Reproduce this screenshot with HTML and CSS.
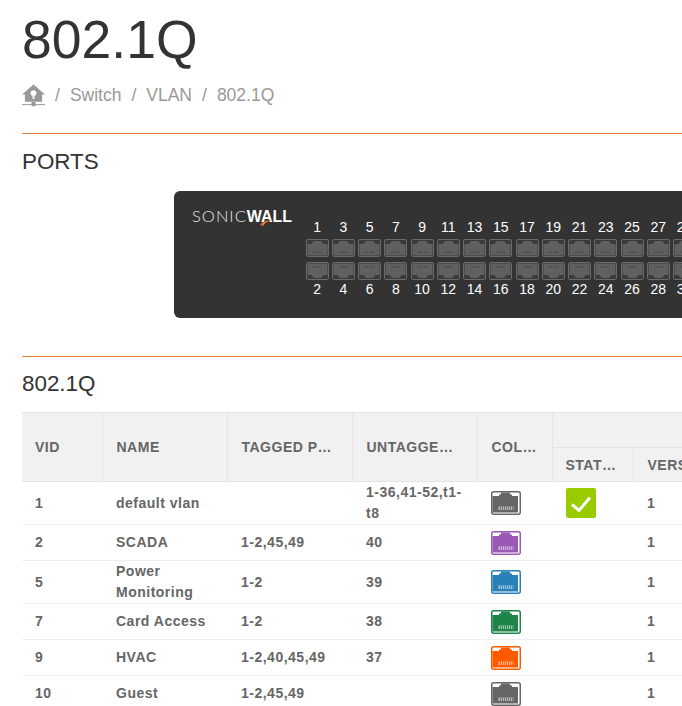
FILE: index.html
```html
<!DOCTYPE html>
<html>
<head>
	<meta charset="utf-8">
	<title>802.1Q</title>
	<link rel="stylesheet" href="styles.css">
</head>
<body>

<svg class='defs' width='0' height='0'>
	<symbol id='port-dim' viewBox='0 0 23 18'>
		<rect x='0.500' y='0.500' width='22' height='17' rx='1.500' fill='#3a3a3a' stroke='#6a6a6a'/>
		<path d='M1.500 5H6V3.500H7.500V2H15.500V3.500H17V5H21.500V16.500H1.500Z' fill='#606060'/>
		<path d='M7 12.500H16V14H7Z' fill='#464646'/>
		<path d='M8.500 12.500V14M10.500 12.500V14M12.500 12.500V14M14.500 12.500V14' stroke='#777' stroke-width='0.500'/>
	</symbol>
	<symbol id='port-live' viewBox='0 0 30 24'>
		<rect x='0.750' y='0.750' width='28.500' height='22.500' rx='2' fill='#fff' stroke='currentColor' stroke-width='1.500'/>
		<path d='M1.500 5H8V3.500H10V1.500H19V3.500H21V5H27V21.500H1.500Z' fill='currentColor'/>
		<path d='M7.500 15.500H22.500V19H7.500Z' fill='#fff' opacity='0.550'/>
		<path d='M9.500 15.500V19M11.500 15.500V19M13.500 15.500V19M15.500 15.500V19M17.500 15.500V19M19.500 15.500V19M21.500 15.500V19' stroke='currentColor' stroke-width='0.800'/>
	</symbol>
</svg>

<h1>802.1Q</h1>

<nav class='crumbs'>
	<svg class='home' viewBox='0 0 24 23'>
		<path d='M12 0L24 10.500H21V18H3V10.500H0Z' fill='#999'/>
		<circle cx='12' cy='9' r='3' fill='#fff'/>
		<path d='M11 11H13V15H11Z' fill='#fff'/>
		<path d='M0 20.500H24V21.500H0Z' fill='#999'/>
		<circle cx='12' cy='20.500' r='2.500' fill='#999'/>
	</svg>
	<span class='sep'>/</span>
	<a>Switch</a>
	<span class='sep'>/</span>
	<a>VLAN</a>
	<span class='sep'>/</span>
	<a>802.1Q</a>
</nav>

<hr class='rule rule-top'>

<h2 class='ports-title'>PORTS</h2>

<section class='panel'>
	<div class='logo'>
		<span class='logo-thin'>SONIC</span><span class='logo-bold'>WALL</span>
		<svg class='swoosh' viewBox='0 0 14 8'>
			<path d='M0 7C3 3 8 1 14 2C9 2.500 6 4 4 8C3 7 1.500 7 0 7Z' fill='#e8762c'/>
		</svg>
	</div>
	<div class='switch'>
		<span>1</span><svg><use href='#port-dim'/></svg><svg class='flip'><use href='#port-dim'/></svg><span>2</span>
		<span>3</span><svg><use href='#port-dim'/></svg><svg class='flip'><use href='#port-dim'/></svg><span>4</span>
		<span>5</span><svg><use href='#port-dim'/></svg><svg class='flip'><use href='#port-dim'/></svg><span>6</span>
		<span>7</span><svg><use href='#port-dim'/></svg><svg class='flip'><use href='#port-dim'/></svg><span>8</span>
		<span>9</span><svg><use href='#port-dim'/></svg><svg class='flip'><use href='#port-dim'/></svg><span>10</span>
		<span>11</span><svg><use href='#port-dim'/></svg><svg class='flip'><use href='#port-dim'/></svg><span>12</span>
		<span>13</span><svg><use href='#port-dim'/></svg><svg class='flip'><use href='#port-dim'/></svg><span>14</span>
		<span>15</span><svg><use href='#port-dim'/></svg><svg class='flip'><use href='#port-dim'/></svg><span>16</span>
		<span>17</span><svg><use href='#port-dim'/></svg><svg class='flip'><use href='#port-dim'/></svg><span>18</span>
		<span>19</span><svg><use href='#port-dim'/></svg><svg class='flip'><use href='#port-dim'/></svg><span>20</span>
		<span>21</span><svg><use href='#port-dim'/></svg><svg class='flip'><use href='#port-dim'/></svg><span>22</span>
		<span>23</span><svg><use href='#port-dim'/></svg><svg class='flip'><use href='#port-dim'/></svg><span>24</span>
		<span>25</span><svg><use href='#port-dim'/></svg><svg class='flip'><use href='#port-dim'/></svg><span>26</span>
		<span>27</span><svg><use href='#port-dim'/></svg><svg class='flip'><use href='#port-dim'/></svg><span>28</span>
		<span>29</span><svg><use href='#port-dim'/></svg><svg class='flip'><use href='#port-dim'/></svg><span>30</span>
	</div>
</section>

<hr class='rule rule-bottom'>

<h2 class='vlan-title'>802.1Q</h2>

<table>
	<colgroup>
		<col class='c-vid'><col class='c-name'><col class='c-ports'><col class='c-ports'>
		<col class='c-color'><col class='c-status'><col class='c-version'>
	</colgroup>
	<thead>
		<tr class='head-top'>
			<th rowspan='2'>VID</th>
			<th rowspan='2'>NAME</th>
			<th rowspan='2'>TAGGED PORTS</th>
			<th rowspan='2'>UNTAGGED PORTS</th>
			<th rowspan='2' class='th-color'>COLOR</th>
			<th colspan='2'></th>
		</tr>
		<tr class='head-sub'>
			<th>STATUS</th>
			<th>VERSION</th>
		</tr>
	</thead>
	<tbody>
		<tr class='r-42'>
			<td>1</td><td>default vlan</td><td></td><td>1-36,41-52,t1-t8</td>
			<td><svg class='jack grey'><use href='#port-live'/></svg></td>
			<td><span class='check'><svg viewBox='0 0 30 30'><path d='M6 16.500L13 22.500L24 9.500' fill='none' stroke='#fff' stroke-width='3'/></svg></span></td>
			<td>1</td>
		</tr>
		<tr class='r-36'>
			<td>2</td><td>SCADA</td><td>1-2,45,49</td><td>40</td>
			<td><svg class='jack purple'><use href='#port-live'/></svg></td><td></td><td>1</td>
		</tr>
		<tr class='r-43'>
			<td>5</td><td>Power Monitoring</td><td>1-2</td><td>39</td>
			<td><svg class='jack blue'><use href='#port-live'/></svg></td><td></td><td>1</td>
		</tr>
		<tr class='r-36'>
			<td>7</td><td>Card Access</td><td>1-2</td><td>38</td>
			<td><svg class='jack green'><use href='#port-live'/></svg></td><td></td><td>1</td>
		</tr>
		<tr class='r-36'>
			<td>9</td><td>HVAC</td><td>1-2,40,45,49</td><td>37</td>
			<td><svg class='jack orange'><use href='#port-live'/></svg></td><td></td><td>1</td>
		</tr>
		<tr class='r-36'>
			<td>10</td><td>Guest</td><td>1-2,45,49</td><td></td>
			<td><svg class='jack grey'><use href='#port-live'/></svg></td><td></td><td>1</td>
		</tr>
	</tbody>
</table>

</body>
</html>
```

FILE: styles.css
```css
html, body {
	overflow: hidden;
	height: 706px;
}

body {
	margin: 0;
	padding: 0 0 0 22px;
	width: 900px;
	font-family: "Liberation Sans", Arial, sans-serif;
	color: #333;
	background: #fff;
}

.defs {
	position: absolute;
}

h1 {
	margin: 10px 0 0;
	font-size: 53.500px;
	line-height: 60px;
	font-weight: 400;
}

h2 {
	margin: 0;
	font-weight: 400;
	font-size: 22.400px;
	line-height: 26px;
}

.crumbs {
	display: flex;
	align-items: center;
	gap: 10px;
	margin-top: 13px;
	height: 24px;
	font-size: 17.500px;
	color: #999;
}

.home {
	width: 23px;
	height: 23px;
}

.rule {
	margin: 0;
	border: 0;
	height: 1px;
	background: #e8813c;
}

.rule-top {
	margin-top: 26px;
}

.ports-title {
	margin-top: 15px;
}

.panel {
	display: flex;
	margin: 16px 0 0 152px;
	width: 700px;
	height: 127px;
	border-radius: 6px;
	background: #333;
}

.logo {
	position: relative;
	flex: none;
	width: 130px;
	padding: 16px 0 0 18px;
	box-sizing: border-box;
	color: #e6e6e6;
	font-size: 16.500px;
	line-height: 18px;
	white-space: nowrap;
}

.logo-thin {
	font-family: Lato, "Liberation Sans", sans-serif;
	font-weight: 300;
	letter-spacing: 1px;
}

.logo-bold {
	font-size: 16px;
	font-weight: 700;
	color: #fff;
}

.swoosh {
	position: absolute;
	left: 85px;
	top: 28px;
	width: 14px;
	height: 7px;
}

.switch {
	display: grid;
	grid-auto-flow: column;
	grid-template-rows: 20px 23px 19px 17px;
	grid-auto-columns: 26.250px;
	align-self: flex-start;
	align-items: start;
	justify-items: center;
	margin-top: 28px;
	color: #fff;
	font-size: 14px;
	line-height: 17px;
}

.switch svg {
	width: 23px;
	height: 18px;
}

.switch .flip {
	transform: scaleY(-1);
}

.vlan-title {
	margin: 14px 0 15px;
}

.rule-bottom {
	margin-top: 38px;
}

table {
	border-collapse: collapse;
	table-layout: fixed;
	width: 760px;
	color: #666;
	font-size: 14px;
	line-height: 21px;
	font-weight: 700;
	letter-spacing: 0.500px;
}

.c-vid { width: 80px; }
.c-name { width: 125px; }
.c-ports { width: 125px; }
.c-color { width: 75px; }
.c-status { width: 81px; }
.c-version { width: 149px; }

th {
	padding: 1px 15px 0 14px;
	background: #f1f1f1;
	border: 1px solid #e4e4e4;
	text-align: left;
	white-space: nowrap;
	overflow: hidden;
	text-overflow: ellipsis;
	letter-spacing: 0.500px;
}

th:first-child {
	border-left: 0;
	padding-left: 13px;
}

th.th-color {
	padding-right: 11px;
}

.head-top {
	height: 35px;
}

.head-sub {
	height: 34px;
}

td {
	padding: 0 13px 0 14px;
	border-bottom: 1px solid #eee;
	vertical-align: middle;
}

td:first-child {
	padding-left: 13px;
}

.r-42 { height: 42px; }
.r-36 { height: 36px; }
.r-43 { height: 43px; }

.jack {
	display: block;
	width: 30px;
	height: 24px;
}

.grey { color: #666; }
.purple { color: #9b59b6; }
.blue { color: #2a80b9; }
.green { color: #1e8449; }
.orange { color: #ff5a00; }

.check {
	display: block;
	width: 30px;
	height: 30px;
	border-radius: 2px;
	background: #9c0;
}

.check svg {
	display: block;
	width: 30px;
	height: 30px;
}
```
